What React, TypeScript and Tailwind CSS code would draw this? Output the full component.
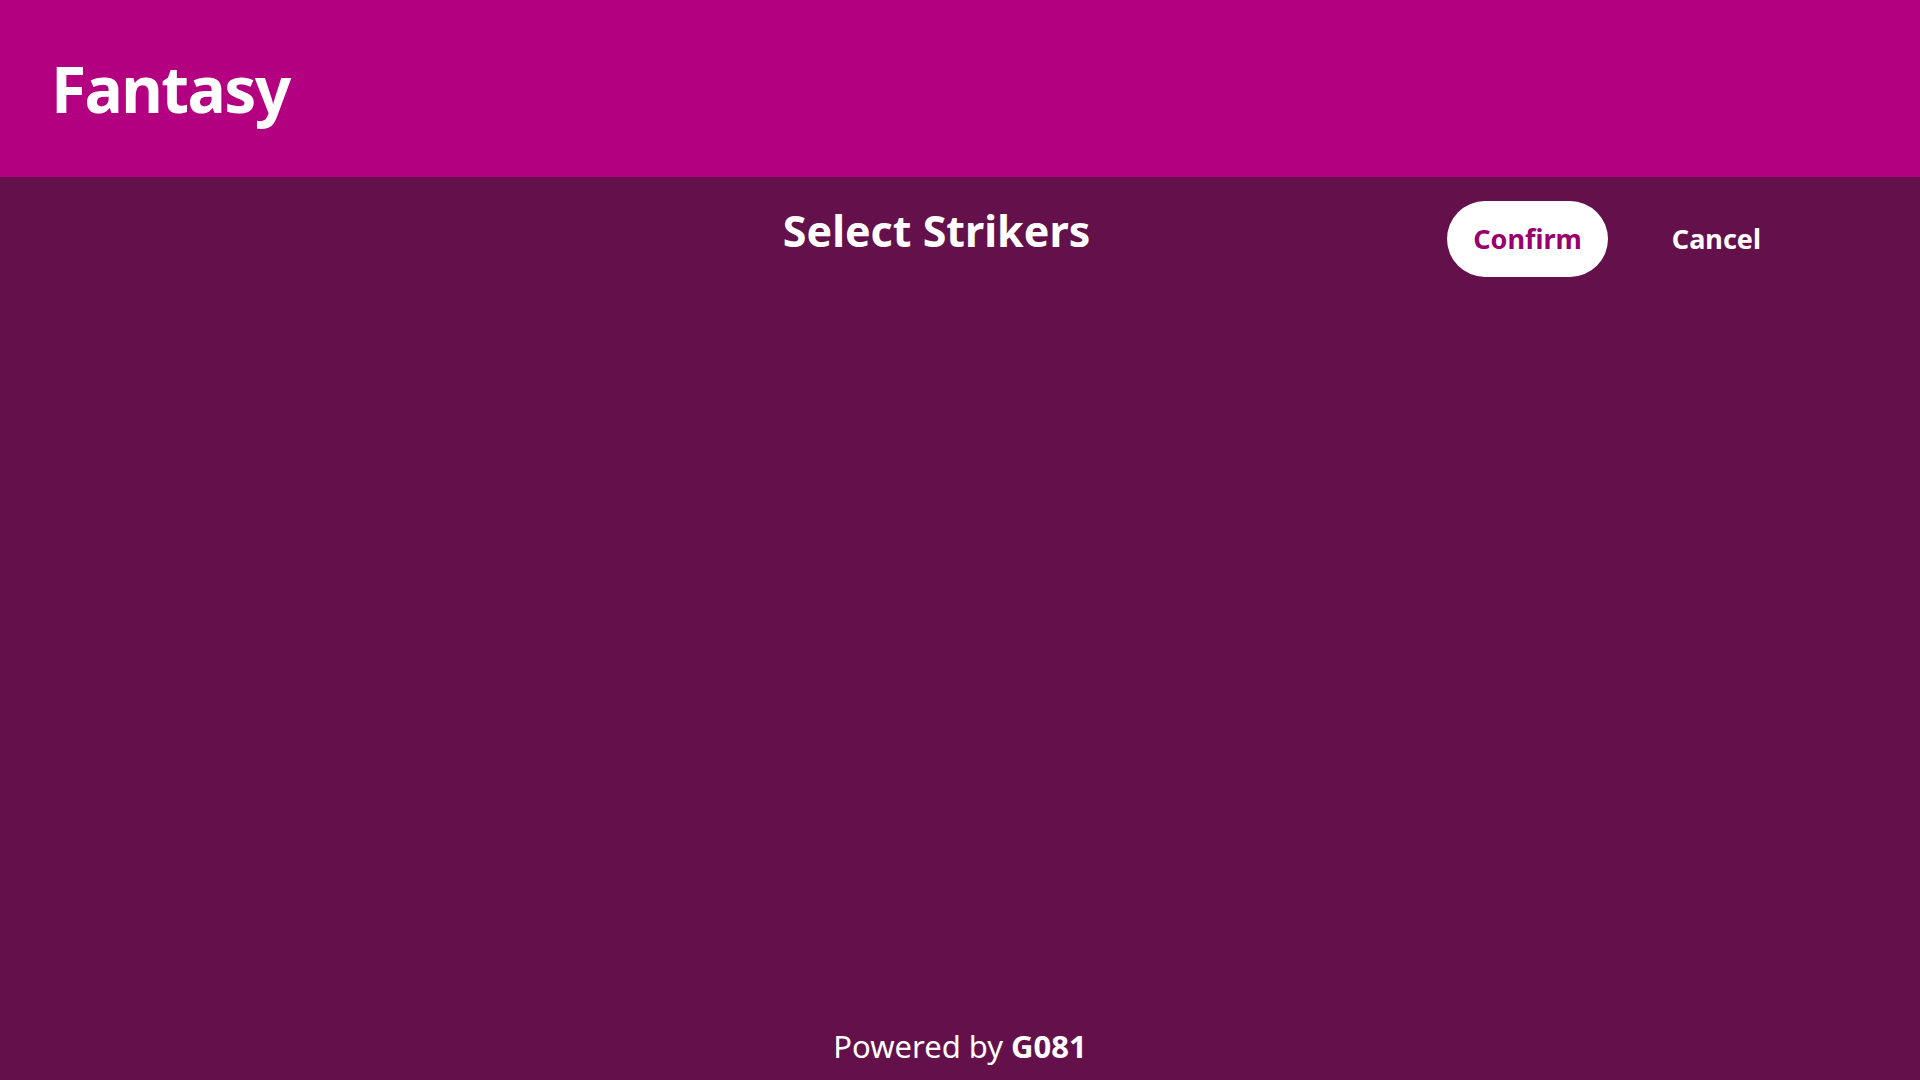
export default function App() {
  const font = { fontFamily: '"Noto Sans", "Open Sans", sans-serif' };

  return (
    <div className="flex min-h-screen flex-col bg-[#64104a] text-white" style={font}>
      {/* Header */}
      <header className="flex h-[177px] items-center bg-[#b30081] pl-[51px]">
        <h1 className="text-[64px] leading-none font-bold tracking-tight">Fantasy</h1>
      </header>

      {/* Title row */}
      <div className="grid grid-cols-[minmax(0,1fr)_auto_minmax(0,1fr)] items-start pt-[24px] pr-[47px]">
        <div />
        <h2 className="mt-[8px] text-[43px] leading-none font-bold">Select Strikers</h2>
        <div className="flex items-center justify-end gap-[64px] pr-[112px]">
          <button className="h-[76px] rounded-full bg-white px-[26px] text-[27px] font-bold text-[#99006c]">
            Confirm
          </button>
          <button className="text-[27px] font-bold text-white">Cancel</button>
        </div>
      </div>

      <main className="flex-1" />

      {/* Footer */}
      <footer className="flex justify-center pb-[18px] text-[31px] leading-none">
        <span>
          Powered by <span className="font-bold">G081</span>
        </span>
      </footer>
    </div>
  );
}
